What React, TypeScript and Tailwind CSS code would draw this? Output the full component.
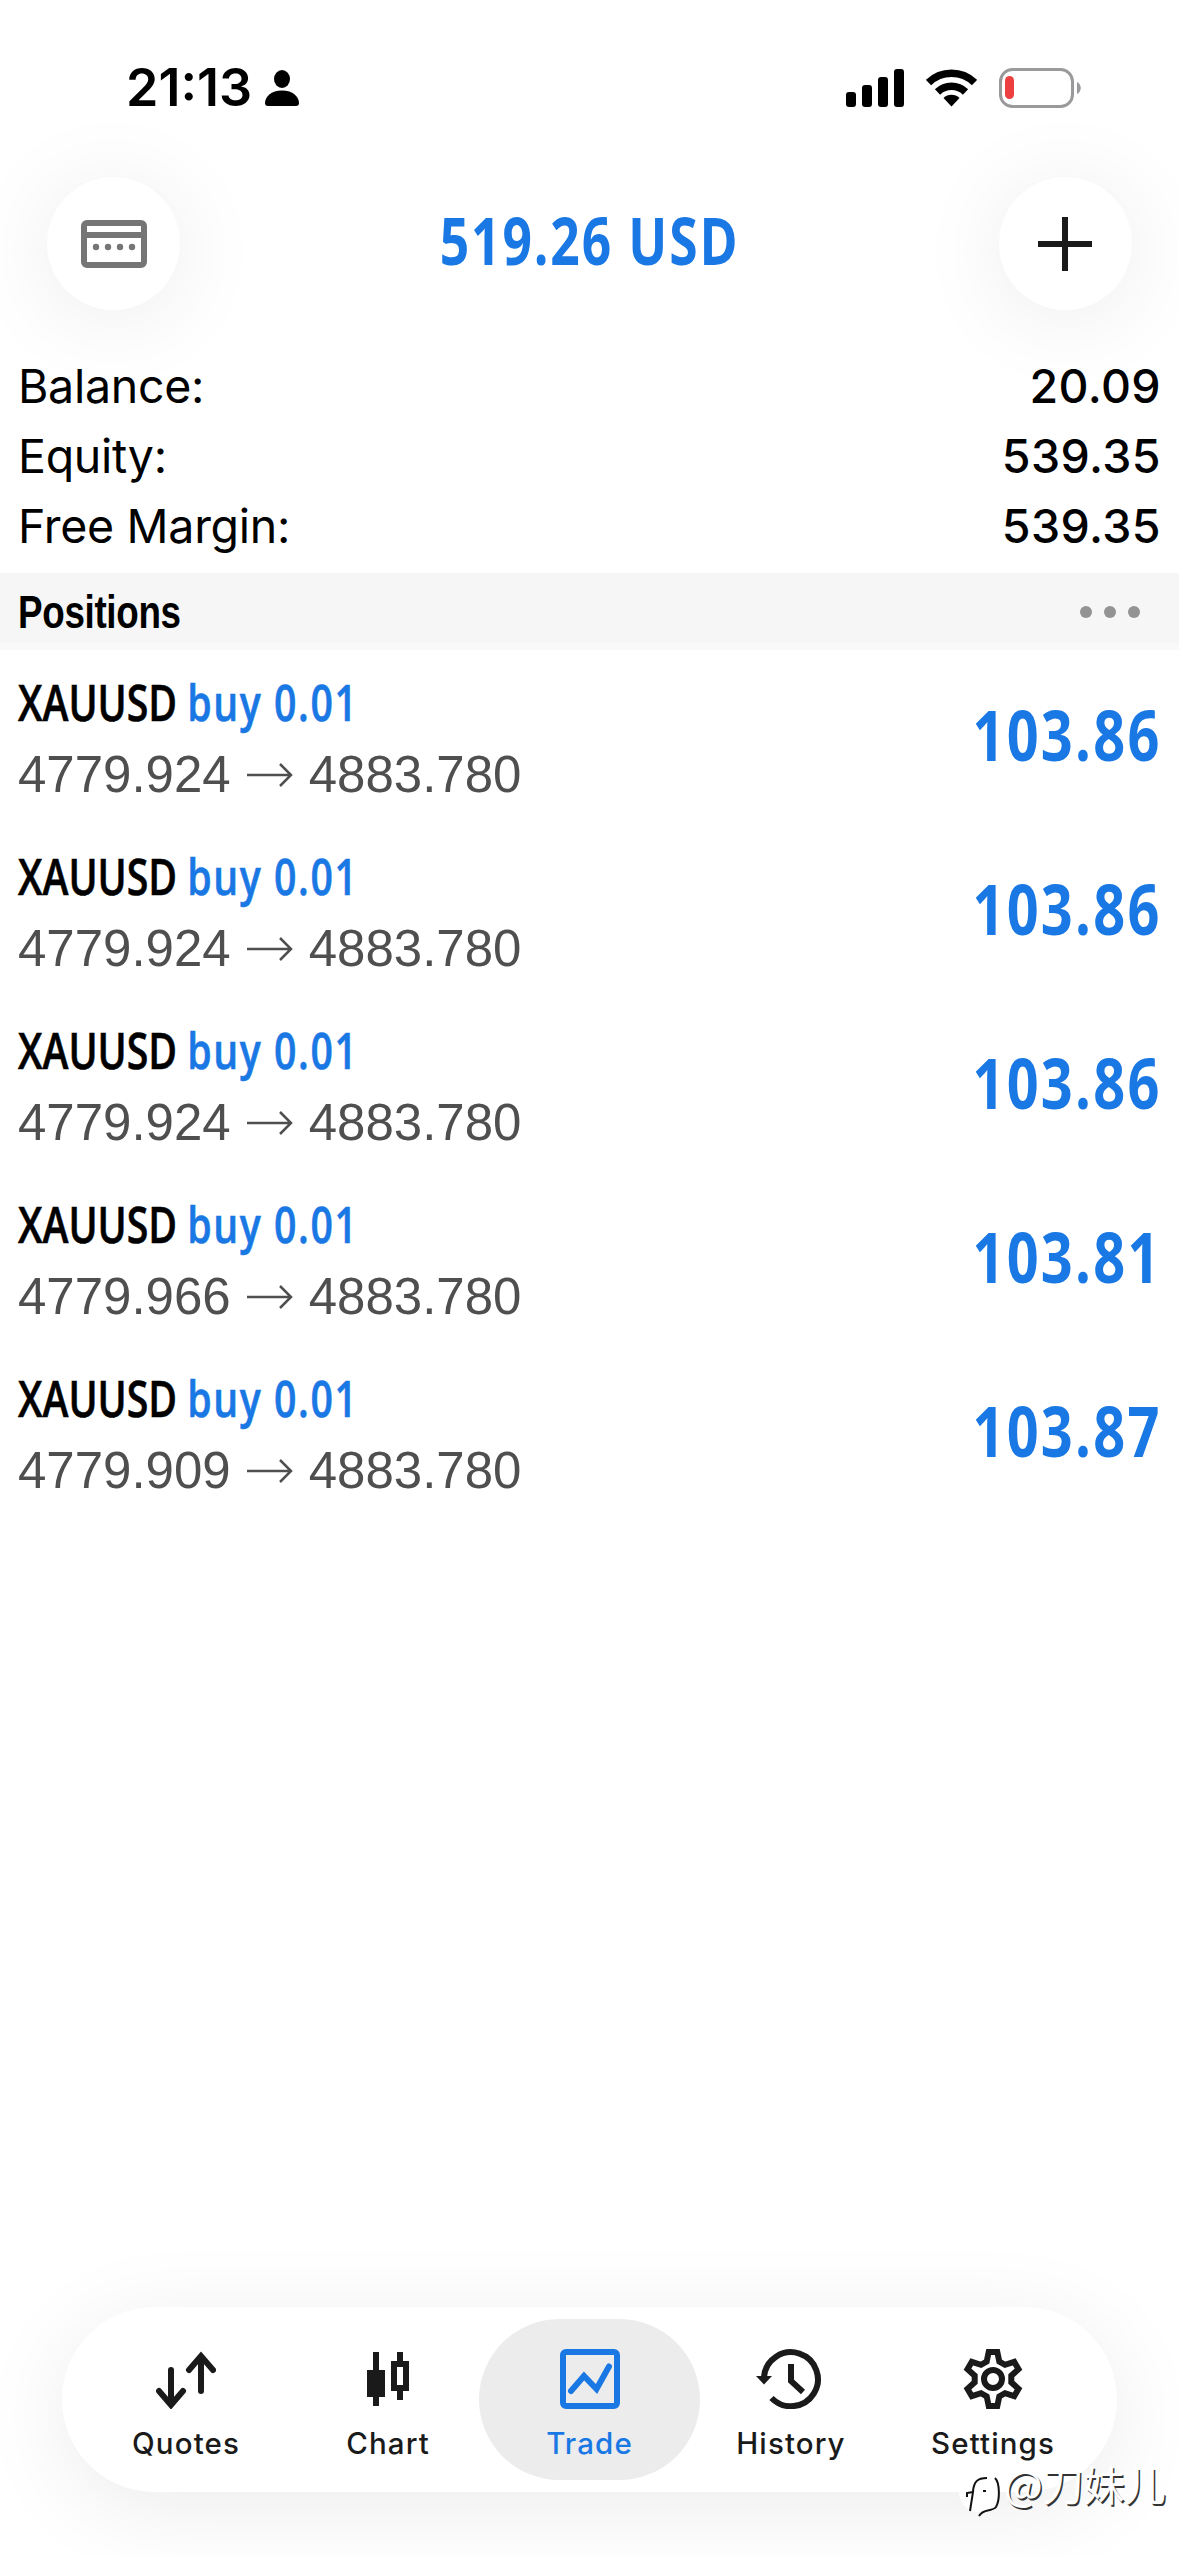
import React from 'react';

interface Position {
  symbol: string;
  side: string;
  volume: string;
  open: string;
  current: string;
  profit: string;
}

interface SummaryRow {
  label: string;
  value: string;
}

interface Tab {
  label: string;
  icon: React.ReactNode;
  active?: boolean;
}

// Account summary
const summary: SummaryRow[] = [
  { label: 'Balance:', value: '20.09' },
  { label: 'Equity:', value: '539.35' },
  { label: 'Free Margin:', value: '539.35' },
];

// Open positions
const positions: Position[] = [
  { symbol: 'XAUUSD', side: 'buy', volume: '0.01', open: '4779.924', current: '4883.780', profit: '103.86' },
  { symbol: 'XAUUSD', side: 'buy', volume: '0.01', open: '4779.924', current: '4883.780', profit: '103.86' },
  { symbol: 'XAUUSD', side: 'buy', volume: '0.01', open: '4779.924', current: '4883.780', profit: '103.86' },
  { symbol: 'XAUUSD', side: 'buy', volume: '0.01', open: '4779.966', current: '4883.780', profit: '103.81' },
  { symbol: 'XAUUSD', side: 'buy', volume: '0.01', open: '4779.909', current: '4883.780', profit: '103.87' },
];

const QuotesIcon = () => (
  <svg width="60" height="60" viewBox="0 0 60 60" fill="none" stroke="currentColor" strokeWidth="6" strokeLinecap="round">
    <path d="M15 21v34M3 42l12 14 12-14" />
    <path d="M45 42V8M33 21L45 7l12 14" />
  </svg>
);

const ChartIcon = () => (
  <svg width="60" height="60" viewBox="0 0 60 60" fill="none" stroke="currentColor" strokeWidth="6">
    <path d="M18 3v54M42 3v12M42 39v12" />
    <path d="M9 21h18v27H9z" fill="currentColor" stroke="none" />
    <path d="M36 15h12v24H36z" />
  </svg>
);

const TradeIcon = () => (
  <svg width="60" height="60" viewBox="0 0 60 60" fill="none" stroke="currentColor" strokeWidth="6">
    <rect x="3" y="3" width="54" height="54" rx="3" />
    <path d="M11 42l13-15 12.500 13L49 17.500" strokeLinecap="round" />
  </svg>
);

const HistoryIcon = () => (
  <svg className="mr-1" width="66" height="60" viewBox="0 0 66 60" fill="none" stroke="currentColor" strokeWidth="6">
    <path d="M8 28A27 27 0 1 1 15.500 49" />
    <path d="M0 27h16l-8 8.500z" fill="currentColor" stroke="none" />
    <path d="M35 15v17l12 11" />
  </svg>
);

const SettingsIcon = () => (
  <svg width="60" height="60" viewBox="-30 -30 60 60" fill="none" stroke="currentColor" strokeWidth="6">
    <path d="M-6.3-17.500L-4.300-27H4.300L6.300-17.500 12-14.200 21.200-17.200 25.500-9.800 18.300-3.300V3.300L25.500 9.800 21.200 17.200 12 14.200 6.300 17.500 4.300 27H-4.300L-6.300 17.500-12 14.200-21.200 17.200-25.500 9.800-18.300 3.300V-3.300L-25.500-9.800-21.200-17.200-12-14.200z" />
    <circle r="9" />
  </svg>
);

// Bottom tab bar
const tabs: Tab[] = [
  { label: 'Quotes', icon: <QuotesIcon /> },
  { label: 'Chart', icon: <ChartIcon /> },
  { label: 'Trade', icon: <TradeIcon />, active: true },
  { label: 'History', icon: <HistoryIcon /> },
  { label: 'Settings', icon: <SettingsIcon /> },
];

const StatusBar = () => (
  <div className="flex h-[177px] items-start justify-between pt-[57px] pr-[98px] pl-[126px]">
    <div className="flex items-center gap-[13px]">
      <span className="text-[52px] leading-[62px] font-semibold">21:13</span>
      <svg width="34" height="36" viewBox="0 0 34 36" fill="currentColor">
        <ellipse cx="17" cy="9" rx="8" ry="9" />
        <path d="M3 36C1 36 0 35 0 33c0-6 6-12.500 17-12.500S34 27 34 33c0 2-1 3-3 3z" />
      </svg>
    </div>
    <div className="flex items-center pt-[11px]">
      <svg width="58" height="38" viewBox="0 0 58 38" fill="currentColor">
        <rect x="0" y="23" width="10" height="15" rx="3" />
        <rect x="16" y="16" width="10" height="22" rx="3" />
        <rect x="32" y="8" width="10" height="30" rx="3" />
        <rect x="48" y="0" width="10" height="38" rx="3" />
      </svg>
      <svg className="ml-[22px]" width="51" height="38" viewBox="0 0 51 38">
        <path d="M2.500 13.500a33 33 0 0 1 46 0" fill="none" stroke="currentColor" strokeWidth="7.500" />
        <path d="M11.500 23a20 20 0 0 1 28 0" fill="none" stroke="currentColor" strokeWidth="7.500" />
        <path d="M25.500 37.500l-8-8.500a11.500 11.500 0 0 1 16 0z" fill="currentColor" />
      </svg>
      <svg className="ml-[22px]" width="82" height="40" viewBox="0 0 82 40">
        <rect x="1.500" y="1.500" width="72" height="37" rx="12" fill="none" stroke="#9a9a9d" strokeWidth="3" />
        <rect x="6" y="8" width="9" height="23" rx="4.500" fill="#ed3f3f" />
        <path d="M78 14c5 2 5 10 0 12z" fill="#9a9a9d" />
      </svg>
    </div>
  </div>
);

const roundButton =
  'flex h-[133px] w-[133px] items-center justify-center rounded-full bg-white shadow-[0_8px_90px_rgba(0,0,0,0.08)]';

const Header = () => (
  <header className="flex h-[133px] items-center justify-between px-[47px]">
    <button className={roundButton}>
      <svg width="66" height="48" viewBox="0 0 66 48" fill="none" stroke="#757575" strokeWidth="6">
        <rect x="3" y="3" width="60" height="42" rx="3" />
        <path d="M3 15h60" />
        <g fill="#757575" stroke="none">
          <circle cx="15" cy="27" r="3.200" />
          <circle cx="27" cy="27" r="3.200" />
          <circle cx="39" cy="27" r="3.200" />
          <circle cx="51" cy="27" r="3.200" />
        </g>
      </svg>
    </button>
    <h1 className="origin-center scale-x-[0.77] pb-[8px] font-['Open_Sans'] text-[67px] leading-none font-bold tracking-[2.4px] whitespace-nowrap text-[#1a78e4]">
      519.26 USD
    </h1>
    <button className={roundButton}>
      <svg width="54" height="54" viewBox="0 0 54 54" stroke="#1a1a1a" strokeWidth="6">
        <path d="M0 27h54M27 0v54" />
      </svg>
    </button>
  </header>
);

const App: React.FC = () => {
  return (
    <div className="relative flex h-[2556px] w-[1179px] flex-col overflow-hidden bg-white font-['Inter',sans-serif] text-black">
      <StatusBar />
      <Header />

      {/* Account summary */}
      <dl className="mt-[41px] h-[222px] px-[18px] text-[46.5px] leading-[70px]">
        {summary.map((row) => (
          <div key={row.label} className="flex justify-between">
            <dt className="tracking-[-0.3px]">{row.label}</dt>
            <dd className="font-medium tracking-[0.4px]">{row.value}</dd>
          </div>
        ))}
      </dl>

      {/* Positions title */}
      <div className="flex h-[77px] items-center justify-between bg-[linear-gradient(#f6f6f6_69px,#f9f9f9_69px)] pr-[39px] pl-[18px]">
        <h2 className="origin-left scale-x-[0.8] font-['Liberation_Sans'] text-[46px] leading-none font-bold tracking-[-0.4px]">Positions</h2>
        <div className="flex gap-3">
          <span className="h-3 w-3 rounded-full bg-[#939393]" />
          <span className="h-3 w-3 rounded-full bg-[#939393]" />
          <span className="h-3 w-3 rounded-full bg-[#939393]" />
        </div>
      </div>

      {/* Open positions */}
      <ul className="flex-1">
        {positions.map((position, index) => (
          <li key={index} className="flex h-[174px] items-center justify-between px-[18px]">
            <div className="flex flex-col pt-1">
              <p className="origin-left scale-x-[0.785] font-['Open_Sans'] text-[50px] leading-[71px] font-semibold whitespace-nowrap [-webkit-text-stroke:0.6px_currentColor]">
                {position.symbol}{' '}
                <span className="tracking-[2px] text-[#1a78e4]">
                  {position.side} {position.volume}
                </span>
              </p>
              <p className="flex items-center font-['Liberation_Sans'] text-[51px] leading-[74px] text-[#4f4f4f]">
                {position.open}
                <svg className="mx-[16px]" width="46" height="24" viewBox="0 0 46 24" fill="none" stroke="currentColor" strokeWidth="2.500">
                  <path d="M0 12h44M33 1l11 11-11 11" />
                </svg>
                {position.current}
              </p>
            </div>
            <p className="mr-[-1px] origin-right scale-x-[0.81] pb-[6px] font-['Open_Sans'] text-[69px] leading-none font-bold tracking-[2.8px] text-[#1a78e4]">
              {position.profit}
            </p>
          </li>
        ))}
      </ul>

      {/* Tab bar */}
      <nav className="mx-[62px] mb-[64px] flex h-[185px] items-center justify-center rounded-full bg-white shadow-[0_16px_90px_rgba(0,0,0,0.08)]">
        {tabs.map((tab) => (
          <button
            key={tab.label}
            className={
              tab.active
                ? 'mx-[-10px] flex h-[161px] w-[221px] flex-col items-center rounded-full bg-[#ececec] pt-[30px] text-[#1a78e4]'
                : 'flex h-[161px] w-[202px] flex-col items-center pt-[30px] text-[#1a1a1a]'
            }
          >
            {tab.icon}
            <span className="mt-[16px] text-[29.5px] leading-[36px] font-medium tracking-[1.1px]">{tab.label}</span>
          </button>
        ))}
      </nav>

      {/* Author tag */}
      <div className="absolute top-[2466px] left-[958px] flex items-start text-white">
        <svg width="46" height="52" viewBox="0 0 46 52" fill="none">
          <circle cx="21" cy="26" r="20" fill="#fff" />
          <g stroke="#111" strokeWidth="2">
            <path d="M12 45l3-19-6 1v4M15 25c1-9 4-13 14-13M25 25h3" />
            <path d="M37 12c5 5 5 22 1 29-4 5-13 1-17 9" />
          </g>
        </svg>
        <span className="mt-[-9px] font-['Noto_Sans_CJK_SC',sans-serif] text-[41px] leading-[52px] font-normal whitespace-nowrap [text-shadow:1.5px_1.5px_0.5px_#333]">
          @刀妹儿
        </span>
      </div>
    </div>
  );
};

export default App;
